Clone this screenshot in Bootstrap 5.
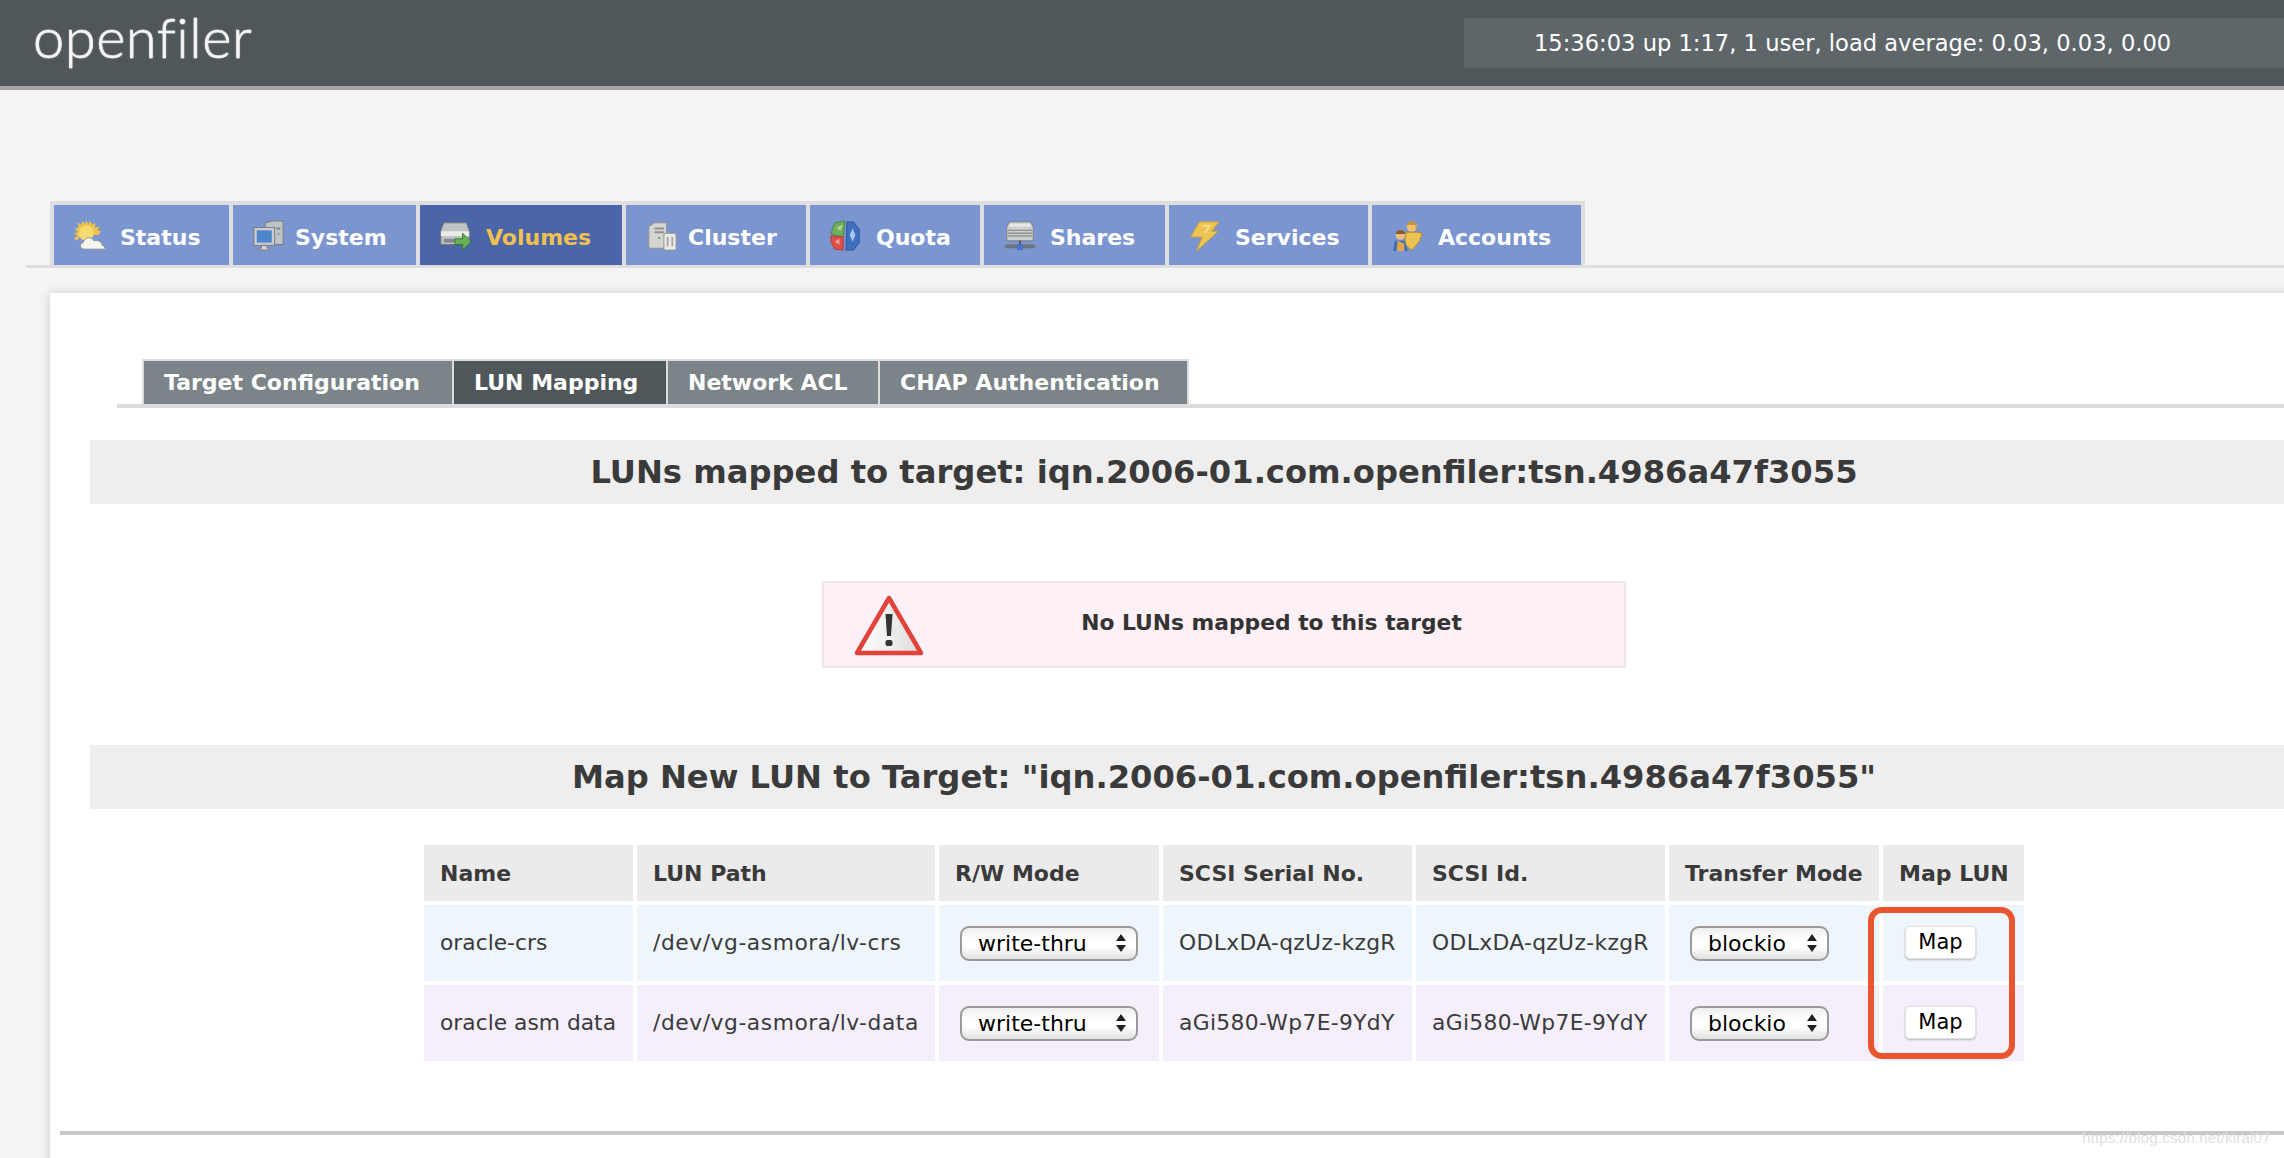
<!DOCTYPE html>
<html lang="en">
<head>
<meta charset="utf-8">
<title>openfiler</title>
<link href="https://cdn.jsdelivr.net/npm/bootstrap@5.3.0/dist/css/bootstrap.min.css" rel="stylesheet">
<style>
html,body{overflow:hidden;height:100%;}
body{background:#f4f4f5;color:#3a3a3a;font-family:"DejaVu Sans",sans-serif;font-size:22px;}
.of-shell{width:2358px;}
.of-top{background:#50575a;border-bottom:4px solid #a5a5a3;height:90px;padding:0;align-items:flex-start;flex-wrap:nowrap;justify-content:flex-start;}
.of-logo{font-family:Lato,sans-serif;font-weight:300;font-size:56px;line-height:1;color:#f4f5f5;margin:9px 0 0 33px;letter-spacing:.5px;padding:0;-webkit-text-stroke:.6px #f4f5f5;text-shadow:0 0 2px rgba(255,255,255,.6);}
.of-load{margin:18px 0 0 auto;width:894px;height:50px;background:#5e666a;color:#fff;font-size:22.6px;line-height:50px;padding-left:70px;white-space:nowrap;}
.of-main{margin:111px 0 0 26px;border-bottom:3px solid #dedee0;padding-left:24px;height:67px;flex-wrap:nowrap;}
.of-main-in{background:#dedee0;padding:4px 4px 0;gap:4px;height:64px;flex-wrap:nowrap;}
.of-main a{background:#7b95d0;color:#fff;font-weight:700;font-size:22px;height:60px;display:flex;align-items:center;padding:4px 0 0;text-decoration:none;white-space:nowrap;}
.of-main a.on{background:#4a66a8;color:#f0c050;}
.of-main svg{flex:none;width:32px;height:32px;margin:-3px 14px 0 20px;}
.of-main a.tight svg{margin-right:10px;}
.w-st{width:175px}.w-sy{width:183px}.w-vo{width:202px}.w-cl{width:180px}.w-qu{width:170px}.w-sh{width:181px}.w-se{width:199px}.w-ac{width:209px}
.of-panel{margin:25px 0 0 50px;background:#fff;box-shadow:0 0 10px rgba(0,0,0,.16);padding:66px 0 40px 40px;min-height:900px;}
.of-sub{margin-left:27px;border-bottom:4px solid #dcdcdc;height:49px;padding-left:25px;flex-wrap:nowrap;}
.of-sub-in{background:#dcdcdc;padding:2px 2px 0;gap:2px;height:45px;flex-wrap:nowrap;}
.of-sub a{background:#7b8488;color:#fff;font-weight:700;font-size:22px;height:43px;display:flex;align-items:center;justify-content:flex-start;padding:0 0 0 20px;text-decoration:none;white-space:nowrap;}
.of-sub a.on{background:#50575a;}
.s-1{width:308px}.s-2{width:212px}.s-3{width:210px}.s-4{width:307px}
.of-band{background:#eee;height:64px;margin:32px 0 0;font-size:32.2px;font-weight:700;line-height:64px;text-align:center;color:#3a3a3a;white-space:nowrap;}
.of-msg{width:804px;height:87px;margin:77px auto 77px;background:#fdf0f7;border:2px solid #f0e5ea;border-radius:0;padding:0;color:#333;font-weight:700;font-size:21.8px;display:flex;align-items:center;position:relative;}
.of-msg svg{width:72px;height:62px;margin-left:29px;flex:none;}
.of-msg span{flex:1;text-align:center;padding:0 6px 3px 0;}
.of-tw{width:1608px;margin:32px auto 0;position:relative;}
.of-tb{width:auto;border-collapse:separate;border-spacing:4px;margin:0;table-layout:fixed;color:#3a3a3a;}
.of-tb th{background:#ebebeb;height:56px;padding:0 0 0 16px;font-size:22px;font-weight:700;vertical-align:middle;white-space:nowrap;border:0;color:#3a3a3a;box-shadow:none;}
.of-tb td{height:76px;padding:0 0 0 16px;font-size:21.8px;vertical-align:middle;white-space:nowrap;border:0;color:#3a3a3a;box-shadow:none;}
.of-tb .ra td{background:#eef5fb;}
.of-tb .rb td{background:#f5effb;}
.of-tb td.of-path{letter-spacing:.55px;}
.of-tb td.of-ser{letter-spacing:.35px;}
.c1{width:209px}.c2{width:298px}.c3{width:220px}.c4{width:249px}.c5{width:249px}.c6{width:210px}.c7{width:141px}
.of-sel{appearance:none;-webkit-appearance:none;display:block;height:35px;padding:0 0 0 16px;margin-left:5px;font-size:22px;line-height:31px;color:#000;border:2px solid #9a9a9a;border-radius:9px;background-color:#fff;background-image:url("data:image/svg+xml,%3Csvg xmlns='http://www.w3.org/2000/svg' width='12' height='20'%3E%3Cpath d='M6 1l5 7H1zM6 19l5-7H1z' fill='%23222'/%3E%3C/svg%3E"),linear-gradient(#eee,#fff 35%,#fff 60%,#e0e0e0);background-repeat:no-repeat;background-position:right 9px center,0 0;background-size:12px 20px,100% 100%;}
.of-sel:focus{box-shadow:none;border-color:#9a9a9a;}
.sel-w{width:178px}.sel-b{width:139px}
.of-map{display:block;width:71px;height:33px;padding:0;margin:0 0 2px 6px;font-size:21px;line-height:31px;color:#000;background:#fff;border:1px solid #e2e2e2;border-radius:5px;box-shadow:0 1px 2px rgba(0,0,0,.25);}
.of-mark{position:absolute;left:1448px;top:66px;width:147px;height:152px;border:6px solid #e8552e;border-radius:14px;pointer-events:none;}
.of-rule{height:4px;background:#c8c8c8;margin:66px 0 0 -30px;opacity:1;border:0;}
.of-wm{position:fixed;left:2082px;top:1128px;font-family:"Liberation Sans",sans-serif;font-size:15.500px;line-height:20px;white-space:nowrap;color:#dedede;}
</style>
</head>
<body>
<div class="of-shell">
<nav class="navbar of-top">
  <a class="navbar-brand of-logo" href="#">openfiler</a>
  <div class="of-load">15:36:03 up 1:17, 1 user, load average: 0.03, 0.03, 0.00</div>
</nav>
<div class="nav of-main">
  <div class="nav of-main-in">
    <a class="w-st" href="#"><svg viewBox="0 0 34 34"><path d="M13 0l2 4 3-3 1 4 4-2-1 5 5-1-2 4 4 1-3 4H8L3 22l-3-3 4-2-4-3 4-1-3-4 4-1-1-5 4 2 1-4 3 3z" fill="#ecc24a"/><circle cx="13" cy="14" r="8" fill="#f6da70"/><path d="M11 31c-5 0-6-6-1-7 1-6 9-7 11-2 5-1 9 2 9 5 2 0 4 4 3 4z" fill="#f4f4f0" stroke="#8d8d84" stroke-width="1"/></svg>Status</a>
    <a class="w-sy tight" href="#"><svg viewBox="0 0 34 34"><path d="M13 3l8-2h11v25H13z" fill="#bfc2c6" stroke="#767a80"/><rect x="25" y="8" width="4" height="2" fill="#7b7f85"/><rect x="26" y="14" width="2" height="2" fill="#58b060"/><rect x="1" y="8" width="22" height="19" fill="#c9cdd0" stroke="#777b80"/><rect x="4" y="11" width="16" height="13" fill="#4e86cc"/><path d="M9 27h6v3h3v2H6v-2h3z" fill="#d0d2d4" stroke="#777b80"/></svg>System</a>
    <a class="w-vo on" href="#"><svg viewBox="0 0 34 34"><path d="M4 3h24l3 8v15H1V11z" fill="#c2c4c4" stroke="#74787a"/><rect x="1" y="12" width="30" height="5" fill="#eceeee"/><rect x="4" y="20" width="20" height="4" fill="#85898b"/><path d="M16 20h8v-6l9 9-9 9v-6h-8z" fill="#69b058" stroke="#2f7a2f"/></svg>Volumes</a>
    <a class="w-cl tight" href="#"><svg viewBox="0 0 34 34"><path d="M3 7l6-4h13v27H3z" fill="#d4d5d2" stroke="#8f918d"/><rect x="9" y="8" width="10" height="2" fill="#8e908d"/><rect x="9" y="12" width="10" height="2" fill="#8e908d"/><circle cx="14" cy="19" r="1.300" fill="#5cae5c"/><rect x="19" y="14" width="13" height="18" rx="2" fill="#e9e9e5" stroke="#8f918d"/><path d="M23 18v10M28 18v10" stroke="#a9aaa6" stroke-width="2"/></svg>Cluster</a>
    <a class="w-qu" href="#"><svg viewBox="0 0 34 34"><path d="M16 1l-11 2-4 12 13 3z" fill="#6fae5c" stroke="#4a8a40"/><path d="M7 8l7-3-3 7z" fill="#a9d59a"/><path d="M1 17l13 1v14l-9-1-4-8z" fill="#dd4f4a" stroke="#b83a36"/><path d="M10 20v6l-5-3z" fill="#f0a09c"/><path d="M18 2l7 0 6 8v14l-6 8h-8z" fill="#3f70c0" stroke="#2c5298"/><path d="M24 9l3 7-3 7-3-7z" fill="#a8c6ee"/></svg>Quota</a>
    <a class="w-sh" href="#"><svg viewBox="0 0 34 34"><path d="M3 7l3-5h22l3 5v15H3z" fill="#cfd0d0" stroke="#7c8082"/><rect x="6" y="4" width="22" height="3" fill="#e8e8e8"/><path d="M4 11h26M4 14h26M4 17h26" stroke="#8c9092" stroke-width="1.500"/><rect x="1" y="26" width="32" height="4" fill="#6f7476"/><path d="M17 22v6" stroke="#555" stroke-width="2"/><rect x="14" y="26" width="6" height="6" fill="#3f74cc"/></svg>Shares</a>
    <a class="w-se" href="#"><svg viewBox="0 0 34 34"><path d="M11 2h21l-8 10h7L8 33l6-15H2z" fill="#ecc552" stroke="#cfa235"/><path d="M14 6h8l-5 8" fill="none" stroke="#f7e08d" stroke-width="2"/></svg>Services</a>
    <a class="w-ac" href="#"><svg viewBox="0 0 34 34"><circle cx="21" cy="7" r="5.500" fill="#f0c070"/><path d="M16 6c0-5 9-7 10 0l1 3h-2V5h-7z" fill="#c98a32"/><path d="M13 26l2-13h11l6 1-3 9-8 9z" fill="#ecc34f" stroke="#b08a2c"/><circle cx="9" cy="16" r="5" fill="#efbc84"/><path d="M4 15c0-6 10-6 10 0z" fill="#8a5a2c"/><path d="M1 33l2-11h11l3 11z" fill="#3e72b8"/><path d="M6 22l-1 11h8v-8z" fill="#e0a64a"/></svg>Accounts</a>
  </div>
</div>
<div class="of-panel">
  <div class="nav of-sub">
    <div class="nav of-sub-in">
      <a class="s-1" href="#">Target Configuration</a>
      <a class="s-2 on" href="#">LUN Mapping</a>
      <a class="s-3" href="#">Network ACL</a>
      <a class="s-4" href="#">CHAP Authentication</a>
    </div>
  </div>
  <div class="of-band">LUNs mapped to target: iqn.2006-01.com.openfiler:tsn.4986a47f3055</div>
  <div class="alert of-msg" role="alert">
    <svg viewBox="0 0 72 62"><defs><linearGradient id="tri" x1="0" x2="1"><stop offset="0" stop-color="#fff"/><stop offset="1" stop-color="#dcdcdc"/></linearGradient></defs><path d="M36 4l32 55H4z" fill="url(#tri)" stroke="#e2423a" stroke-width="4.500" stroke-linejoin="round"/><path d="M32.500 20h7l-1.500 22h-4z" fill="#333"/><rect x="32.500" y="46" width="7" height="6" rx="2" fill="#333"/></svg>
    <span>No LUNs mapped to this target</span>
  </div>
  <div class="of-band of-band2">Map New LUN to Target: "iqn.2006-01.com.openfiler:tsn.4986a47f3055"</div>
  <div class="of-tw">
    <table class="table of-tb">
      <colgroup><col class="c1"><col class="c2"><col class="c3"><col class="c4"><col class="c5"><col class="c6"><col class="c7"></colgroup>
      <thead><tr><th>Name</th><th>LUN Path</th><th>R/W Mode</th><th>SCSI Serial No.</th><th>SCSI Id.</th><th>Transfer Mode</th><th>Map LUN</th></tr></thead>
      <tbody>
        <tr class="ra"><td>oracle-crs</td><td class="of-path">/dev/vg-asmora/lv-crs</td><td><select class="form-select of-sel sel-w"><option>write-thru</option></select></td><td class="of-ser">ODLxDA-qzUz-kzgR</td><td class="of-ser">ODLxDA-qzUz-kzgR</td><td><select class="form-select of-sel sel-b"><option>blockio</option></select></td><td><button class="btn of-map" type="button">Map</button></td></tr>
        <tr class="rb"><td>oracle asm data</td><td class="of-path">/dev/vg-asmora/lv-data</td><td><select class="form-select of-sel sel-w"><option>write-thru</option></select></td><td class="of-ser">aGi580-Wp7E-9YdY</td><td class="of-ser">aGi580-Wp7E-9YdY</td><td><select class="form-select of-sel sel-b"><option>blockio</option></select></td><td><button class="btn of-map" type="button">Map</button></td></tr>
      </tbody>
    </table>
    <div class="of-mark"></div>
  </div>
  <hr class="of-rule">
</div>
</div>
<div class="of-wm">https://blog.csdn.net/kiral07</div>
</body>
</html>
